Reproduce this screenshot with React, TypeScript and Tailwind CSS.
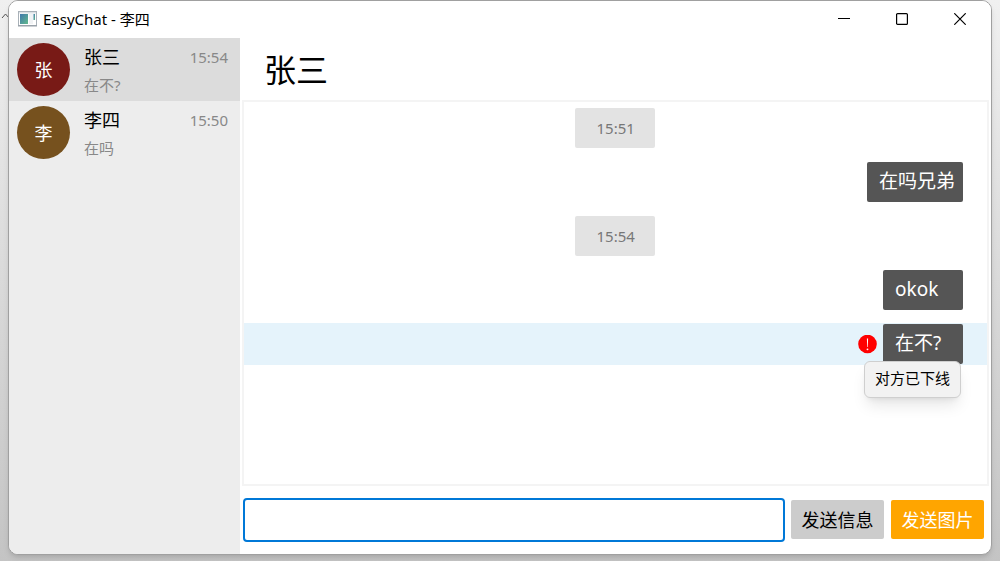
import type { ReactNode } from "react";

interface Contact {
  name: string;
  initial: string;
  preview: string;
  time: string;
  color: string;
  active?: boolean;
}

interface Message {
  id: number;
  kind: "time" | "sent";
  text: string;
  width: string;
  error?: string;
}

const contacts: Contact[] = [
  { name: "张三", initial: "张", preview: "在不?", time: "15:54", color: "bg-[#781a16]", active: true },
  { name: "李四", initial: "李", preview: "在吗", time: "15:50", color: "bg-[#76511e]" },
];

const messages: Message[] = [
  { id: 1, kind: "time", text: "15:51", width: "w-20" },
  { id: 2, kind: "sent", text: "在吗兄弟", width: "w-24" },
  { id: 3, kind: "time", text: "15:54", width: "w-20" },
  { id: 4, kind: "sent", text: "okok", width: "w-20" },
  { id: 5, kind: "sent", text: "在不?", width: "w-20", error: "对方已下线" },
];

function AppIcon() {
  return (
    <svg width="19" height="16" viewBox="0 0 19 16" aria-hidden="true">
      <defs>
        <linearGradient id="pane" x1="0" y1="0" x2="1" y2="1">
          <stop offset="0" stopColor="#3f78ac" />
          <stop offset="1" stopColor="#62b98c" />
        </linearGradient>
      </defs>
      <rect x="0.5" y="0.5" width="18" height="14" fill="#fff" stroke="#a9b1b8" />
      <rect x="0" y="14" width="19" height="1.5" fill="#9aa2aa" />
      <rect x="1" y="1" width="17" height="1.5" fill="#dde1e5" />
      <rect x="2" y="3" width="8" height="10" fill="url(#pane)" />
      <rect x="11" y="3" width="4" height="10" fill="#f1f3f5" />
      <rect x="15.5" y="3" width="1.5" height="6" fill="url(#pane)" />
    </svg>
  );
}

function WindowButton({ label, children }: { label: string; children: ReactNode }) {
  return (
    <button type="button" aria-label={label} className="flex h-full w-[58px] items-center justify-center hover:bg-black/5">
      <svg width="12" height="12" viewBox="0 0 12 12" fill="none" stroke="#000" aria-hidden="true">
        {children}
      </svg>
    </button>
  );
}

function TitleBar() {
  return (
    <header className="flex h-[37px] shrink-0 items-center bg-white pr-0.5 pb-px pl-[9px]">
      <AppIcon />
      <span className="ml-1.5 text-[15px] leading-5">EasyChat - 李四</span>
      <div className="ml-auto flex h-full">
        <WindowButton label="最小化">
          <path d="M0 5.5h12" />
        </WindowButton>
        <WindowButton label="最大化">
          <rect x="0.6" y="0.6" width="10.8" height="10.8" rx="1" strokeWidth="1.2" />
        </WindowButton>
        <WindowButton label="关闭">
          <path d="M0.3 0.3l11.4 11.4M11.7 0.3L0.3 11.7" strokeWidth="1.2" />
        </WindowButton>
      </div>
    </header>
  );
}

function ContactRow({ contact }: { contact: Contact }) {
  return (
    <li>
      <button
        type="button"
        className={`flex h-[63px] w-full items-center pr-3 pl-2 text-left ${contact.active ? "bg-[#dcdcdc]" : ""}`}
      >
        <span
          className={`flex size-[53px] shrink-0 items-center justify-center rounded-full text-lg text-white ${contact.color}`}
        >
          {contact.initial}
        </span>
        <span className="ml-3.5 flex-1 pt-0.5">
          <span className="flex items-center justify-between">
            <span className="text-lg leading-7 text-black">{contact.name}</span>
            <span className="text-[15px] leading-7 text-[#888]">{contact.time}</span>
          </span>
          <span className="block text-[15px] leading-7 text-[#888]">{contact.preview}</span>
        </span>
      </button>
    </li>
  );
}

function MessageRow({ message }: { message: Message }) {
  if (message.kind === "time") {
    return (
      <li className="flex h-[42px] items-center justify-center pr-0.5">
        <time className={`h-10 rounded-xs bg-[#e3e3e3] pl-[22px] text-[15px] leading-10 text-[#777] ${message.width}`}>
          {message.text}
        </time>
      </li>
    );
  }

  return (
    <li className={`flex h-[42px] items-center justify-end pr-6 ${message.error ? "bg-[#e5f3fb]" : ""}`}>
      {message.error && (
        <svg className="mr-1.5" width="19" height="19" viewBox="0 0 19 19" aria-hidden="true">
          <circle cx="9.5" cy="9" r="9.3" fill="#f00" />
          <path d="M8.9 3.5h1.2l-0.3 8.5h-0.6z" fill="#fff" />
          <circle cx="9.5" cy="14.3" r="0.9" fill="#fff" />
        </svg>
      )}
      <div className={`relative h-10 rounded-xs bg-[#555] pl-3 text-[19px] leading-[38px] text-white ${message.width}`}>
        {message.text}
        {message.error && (
          <div
            role="tooltip"
            className="absolute top-[37px] right-0.5 h-[37px] rounded-md border border-[#cfcfcf] bg-[#f2f2f2] px-2.5 text-[15px] leading-[33px] whitespace-nowrap text-black shadow-lg"
          >
            {message.error}
          </div>
        )}
      </div>
    </li>
  );
}

export default function App() {
  return (
    <div className="relative flex h-screen bg-linear-to-b from-[#f0f0f0] to-[#c4c4c4] px-2 pb-1.5 font-['Noto_Sans','Noto_Sans_CJK_SC',sans-serif] text-black">
      {/* chevron of the window behind */}
      <svg className="absolute top-3 left-0" width="8" height="8" viewBox="0 0 8 8" fill="none" stroke="#555" aria-hidden="true">
        <path d="M2 6l3.5-4L9 6" />
      </svg>
      <div className="flex flex-1 flex-col overflow-hidden rounded-[10px] border border-[#a0a0a0] bg-white shadow-md">
        <TitleBar />
        <div className="flex min-h-0 flex-1">
          <ul className="w-[231px] shrink-0 bg-[#ededed]">
            {contacts.map((contact) => (
              <ContactRow key={contact.name} contact={contact} />
            ))}
          </ul>

          <main className="flex min-w-0 flex-1 flex-col px-0.5">
            <h1 className="h-[62px] shrink-0 pl-[22px] text-[32px] leading-[64px]">张三</h1>

            <ul className="flex flex-1 flex-col gap-3 border-2 border-[#f4f4f4] pt-[5px]">
              {messages.map((message) => (
                <MessageRow key={message.id} message={message} />
              ))}
            </ul>

            <form className="flex items-start pt-3 pr-[5px] pb-3 pl-px" onSubmit={(e) => e.preventDefault()}>
              <input
                type="text"
                aria-label="消息"
                className="h-11 min-w-0 flex-1 rounded-sm border-2 border-[#0078d7] px-2 text-lg outline-none"
              />
              <button type="submit" className="mt-0.5 ml-1.5 h-[39px] w-[93px] rounded-xs bg-[#ccc] text-lg">
                发送信息
              </button>
              <button type="button" className="mt-0.5 ml-[7px] h-[39px] w-[93px] rounded-xs bg-[#ffa500] text-lg text-white">
                发送图片
              </button>
            </form>
          </main>
        </div>
      </div>
    </div>
  );
}
